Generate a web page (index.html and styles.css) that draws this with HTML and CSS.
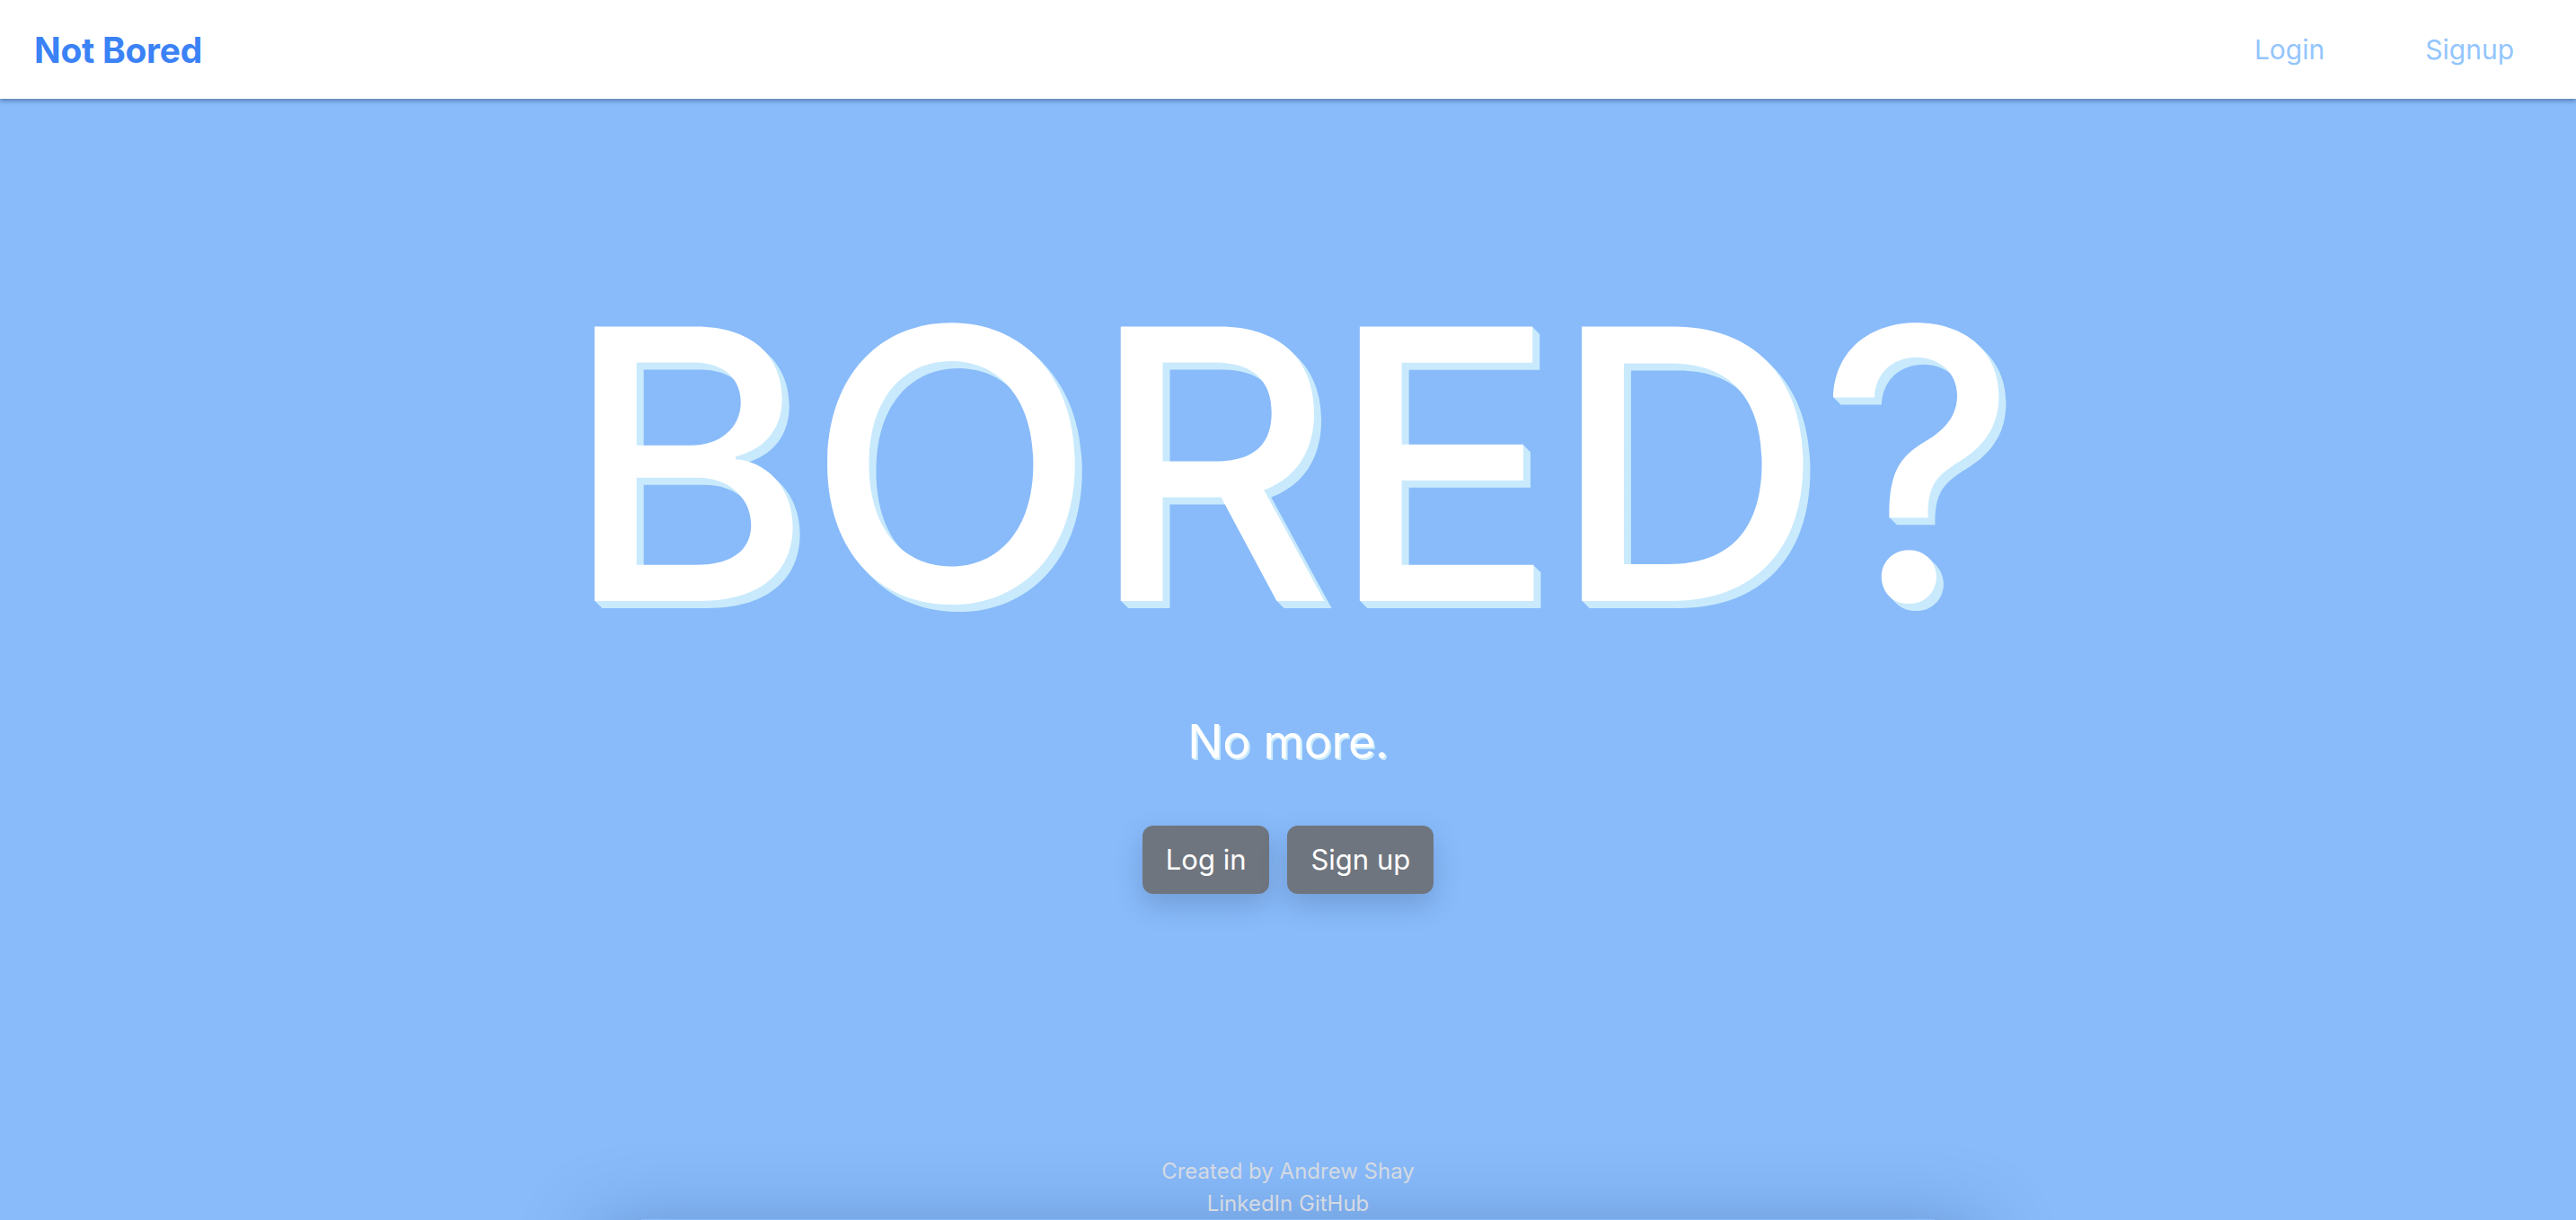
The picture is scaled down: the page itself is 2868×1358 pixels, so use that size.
FILE: index.html
```html
<!DOCTYPE html>
<html lang="en">
<head>
<meta charset="utf-8">
<title>Not Bored</title>
<link rel="stylesheet" href="styles.css">
</head>
<body>
<header class="nav">
  <a class="brand" href="#">Not Bored</a>
  <nav class="nav-links">
    <a href="#">Login</a>
    <a href="#">Signup</a>
  </nav>
</header>
<main class="hero">
  <h1 class="hero-title">BORED?</h1>
  <p class="hero-sub">No more.</p>
  <div class="hero-actions">
    <a class="btn" href="#">Log in</a>
    <a class="btn" href="#">Sign up</a>
  </div>
</main>
<footer class="footer">
  <p class="footer-line">Created by Andrew Shay</p>
  <p class="footer-line"><a href="#">LinkedIn</a> <a href="#">GitHub</a></p>
</footer>
</body>
</html>
```

FILE: styles.css
```css
html {
  overflow: hidden;
}
body {
  margin: 0;
  height: 100vh;
  display: flex;
  flex-direction: column;
  background: #89bbfa;
  font-family: Inter, "Open Sans", "Liberation Sans", sans-serif;
  color: #fff;
}
a {
  text-decoration: none;
  color: inherit;
}
.nav {
  height: 110px;
  flex: none;
  display: flex;
  align-items: center;
  justify-content: space-between;
  padding: 0 69px 0 38px;
  background: #fff;
  box-shadow: 0 2px 5px rgba(20, 40, 80, 0.45);
  position: relative;
  z-index: 1;
}
.brand {
  font-size: 39px;
  font-weight: 700;
  color: #3b82f6;
  letter-spacing: -0.3px;
}
.nav-links {
  display: flex;
  gap: 112px;
  font-size: 30px;
  color: #93c5fd;
}
.hero {
  flex: 1;
  display: flex;
  flex-direction: column;
  align-items: center;
}
.hero-title {
  margin: 196px 0 0;
  font-size: 420px;
  line-height: 1;
  font-weight: 500;
  letter-spacing: -6px;
  color: #fff;
  text-shadow: 1px 1px 0 #c9eafc, 2px 2px 0 #c9eafc, 3px 3px 0 #c9eafc, 4px 4px 0 #c9eafc,
    5px 5px 0 #c9eafc, 6px 6px 0 #c9eafc, 7px 7px 0 #c9eafc, 8px 8px 0 #c9eafc;
}
.hero-sub {
  margin: 74px 0 0;
  font-size: 52px;
  line-height: 1;
  font-weight: 400;
  letter-spacing: -0.3px;
  text-shadow: 1px 1px 0 #c9eafc, 2px 2px 0 #c9eafc;
}
.hero-actions {
  margin-top: 67px;
  display: flex;
  gap: 20px;
}
.btn {
  display: block;
  padding: 14px 26px;
  font-size: 31px;
  line-height: 48px;
  background: #6f757e;
  color: #fff;
  border-radius: 12px;
  box-shadow: 0 12px 30px rgba(30, 50, 90, 0.22);
}
.footer {
  flex: none;
  position: relative;
  padding-top: 20px;
  text-align: center;
  font-size: 24px;
  line-height: 36px;
  color: #d5dae2;
}
.footer::before {
  content: "";
  position: absolute;
  z-index: -1;
  left: 50%;
  bottom: 0;
  width: 1440px;
  height: 1px;
  transform: translateX(-50%);
  box-shadow: 0 60px 90px 50px rgba(20, 50, 110, 0.32);
}
.footer-line {
  margin: 0;
}
```
